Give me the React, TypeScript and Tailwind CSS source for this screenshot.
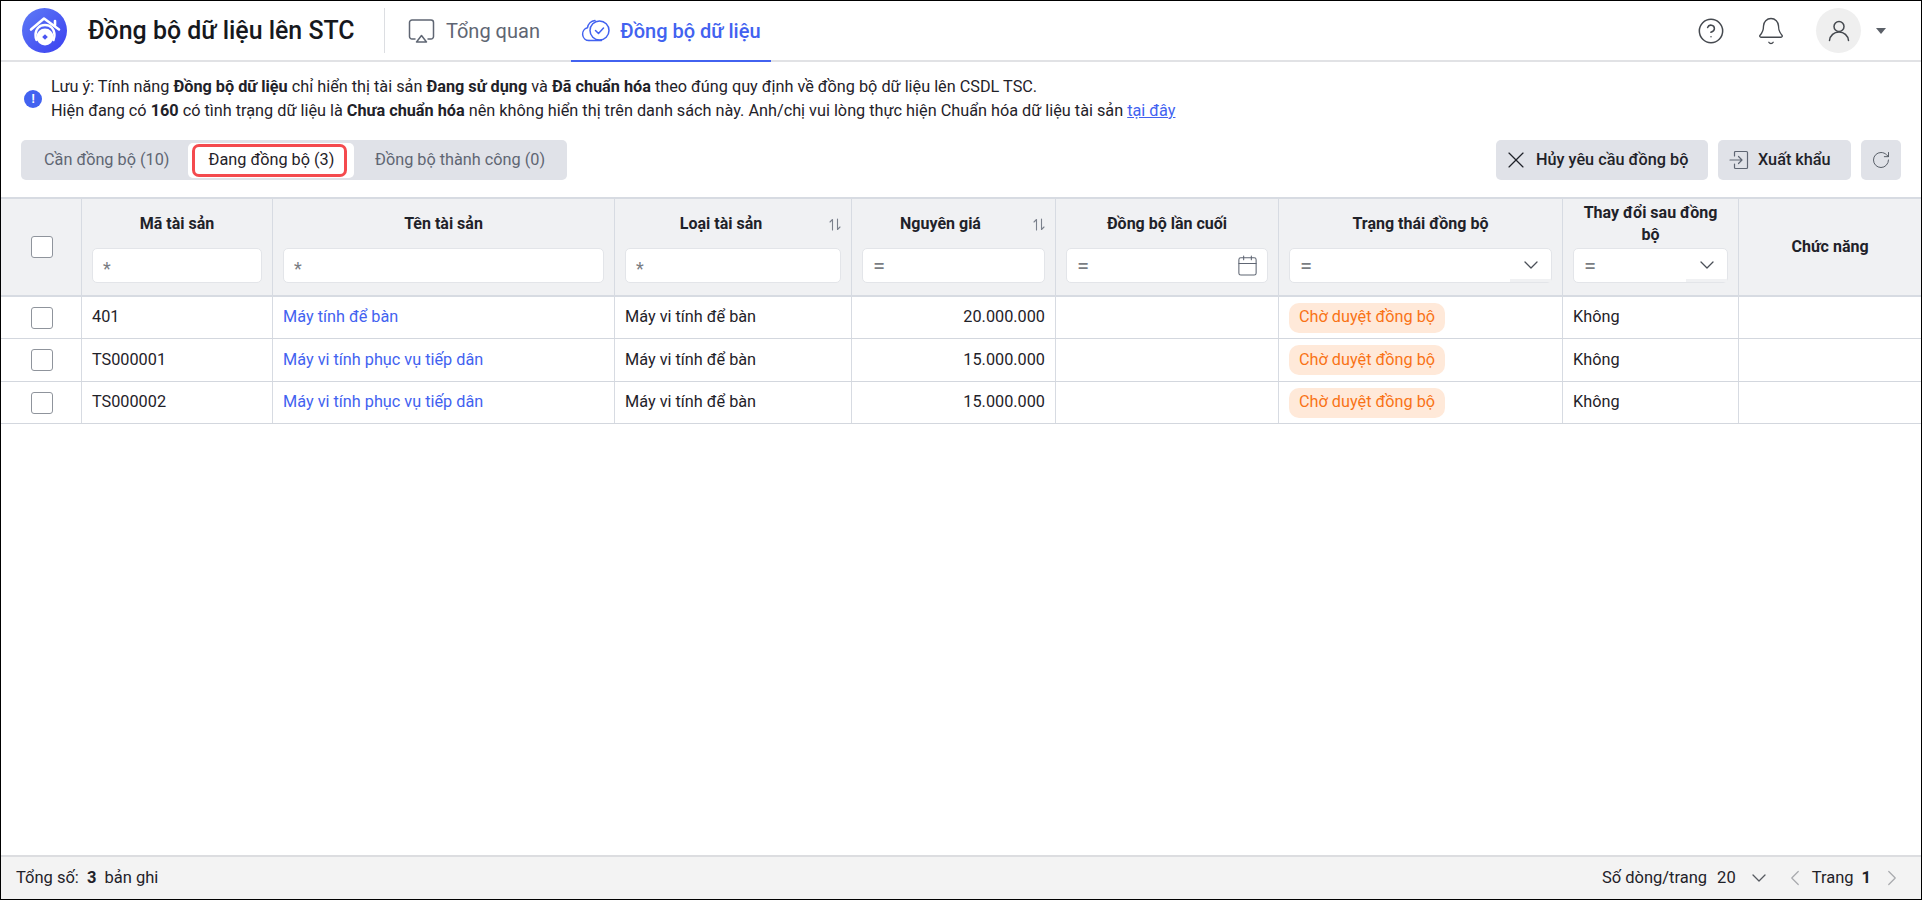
import { ChevronDown, ChevronLeft, ChevronRight, Calendar, RotateCw, X, Bell, CircleHelp } from 'lucide-react';

const gridCols = 'grid grid-cols-[81px_191px_342px_237px_204px_223px_284px_176px_1fr]';

const rows = [
  { code: '401', name: 'Máy tính để bàn', price: '20.000.000', height: 'h-[42px]' },
  { code: 'TS000001', name: 'Máy vi tính phục vụ tiếp dân', price: '15.000.000', height: 'h-[43px]' },
  { code: 'TS000002', name: 'Máy vi tính phục vụ tiếp dân', price: '15.000.000', height: 'h-[42px]' },
];

const Logo = () => (
  <svg width="45" height="45" viewBox="0 0 45 45">
    <defs>
      <linearGradient id="logoBg" x1="0" y1="0" x2="1" y2="1">
        <stop offset="0" stopColor="#5f7cf6" />
        <stop offset="1" stopColor="#3a3ff0" />
      </linearGradient>
    </defs>
    <circle cx="22.5" cy="22.5" r="22.5" fill="url(#logoBg)" />
    <path d="M9 21.5 22 10.5 37 21.5" fill="none" stroke="#fff" strokeWidth="2.6" strokeLinecap="round" strokeLinejoin="round" />
    <path d="M33 13v4" stroke="#fff" strokeWidth="2.6" strokeLinecap="round" />
    <path d="M14.5 32a11 11 0 0 1-1-5c0-6 4-10 9.500-10s9.500 4 9.500 10c0 2-.5 3.500-1 5" fill="none" stroke="#fff" strokeWidth="2.400" strokeLinecap="round" />
    <circle cx="23" cy="29" r="8.500" fill="#fff" />
    <path d="M23 26.200l2.800 2.800-2.800 2.800-2.800-2.800z" fill="#4a55f2" />
  </svg>
);

const ScreenIcon = () => (
  <svg width="27" height="26" viewBox="0 0 27 26" fill="none" stroke="#5f6673" strokeWidth="1.500" strokeLinecap="round" strokeLinejoin="round">
    <path d="M7 21H4a2.500 2.500 0 0 1-2.500-2.500V4.500A2.500 2.500 0 0 1 4 2h19a2.500 2.500 0 0 1 2.500 2.500v14A2.500 2.500 0 0 1 23 21h-3" />
    <path d="M13.500 17.500 18.500 24h-10z" />
  </svg>
);

const CloudCheckIcon = () => (
  <svg width="29" height="25" viewBox="0 0 29 25" fill="none" stroke="#4262f0" strokeWidth="1.500" strokeLinecap="round" strokeLinejoin="round">
    <path d="M8 22.500a6.500 6.500 0 0 1-1.500-12.800A8.500 8.500 0 0 1 14 2.500" />
    <path d="M8 22.500h12.500" />
    <circle cx="18.500" cy="12.500" r="9.500" />
    <path d="m14.500 12.500 3 3 5-5.500" />
  </svg>
);

const UserIcon = () => (
  <svg width="22" height="22" viewBox="0 0 22 22" fill="none" stroke="#45494f" strokeWidth="1.500" strokeLinecap="round">
    <circle cx="11" cy="6.500" r="5" />
    <path d="M1.500 20.500c.5-5 4.500-8.500 9.500-8.500s9 3.500 9.500 8.500" />
  </svg>
);

const ExportIcon = () => (
  <svg width="20" height="20" viewBox="0 0 20 20" fill="none" stroke="#5f6673" strokeWidth="1.200" strokeLinecap="round" strokeLinejoin="round">
    <path d="M5.500 6V2.500a1 1 0 0 1 1-1h11a1 1 0 0 1 1 1v15a1 1 0 0 1-1 1h-11a1 1 0 0 1-1-1V14" />
    <path d="M1 10h12M9.500 6.500 13 10l-3.500 3.500" />
  </svg>
);

const SortIcon = () => (
  <svg width="12" height="13" viewBox="0 0 12 13" fill="none" stroke="#7b818c" strokeWidth="1.100" strokeLinecap="round" strokeLinejoin="round" className="absolute right-[10px] top-[19px]">
    <path d="M3.500 12V1.500L1 4M8.500 1v10.500L11 9" />
  </svg>
);

const Checkbox = () => <div className="ml-[1px] w-[22px] h-[22px] rounded-[3px] border border-[#8f949c] bg-white" />;

const Filter = ({ mark, children }: { mark: string; children?: React.ReactNode }) => (
  <div className="relative flex items-center h-[35px] bg-white rounded-[5px] border border-[#e3e5e9] pl-[10px] text-[#7a7d83]">
    {mark === '*' ? <span className="text-[18px] translate-y-[3px]">*</span> : <span className="text-[22px]">{mark}</span>}
    {children}
  </div>
);

const SelectFilter = () => (
  <Filter mark="=">
    <ChevronDown size={24} strokeWidth={1.3} className="absolute right-[8px] top-[4px] text-[#4a4f57]" />
    <div className="absolute right-0 bottom-0 w-[41px] h-[3px] bg-[#f0f1f3]" />
  </Filter>
);

const HeadCell = ({ title, sort, filter, titleClass = '' }: { title: string; sort?: boolean; filter: React.ReactNode; titleClass?: string }) => (
  <div className="relative flex flex-col border-r border-[#d7dbe2] px-[10px]">
    <div className={`h-[49px] flex items-center justify-center text-center font-bold text-[16px] leading-[22px] text-[#1f2229] ${titleClass}`}>{title}</div>
    {sort && <SortIcon />}
    {filter}
  </div>
);

export default function App() {
  return (
    <div className="w-[1922px] h-[900px] flex flex-col bg-white border border-black font-['Roboto',sans-serif] text-[16.25px] text-[#1f2229] overflow-hidden">
      <header className="h-[61px] flex items-center border-b-2 border-[#e1e2e5] shrink-0">
        <div className="ml-[21px]"><Logo /></div>
        <h1 className="ml-[21px] w-[296px] text-[24.900px] font-medium text-[#16181d]">Đồng bộ dữ liệu lên STC</h1>
        <div className="w-px h-[45px] bg-[#dcdee2]" />
        <div className="ml-[23px] flex items-center gap-[11px] text-[20px] text-[#5f6673]">
          <ScreenIcon />
          Tổng quan
        </div>
        <div className="relative ml-[31px] h-full w-[200px] flex items-center justify-center gap-[10px] text-[20px] font-medium text-[#4262f0]">
          <CloudCheckIcon />
          Đồng bộ dữ liệu
          <div className="absolute left-0 right-0 -bottom-[2px] h-[2px] bg-[#4262f0]" />
        </div>
        <div className="ml-auto flex items-center text-[#45494f]">
          <CircleHelp size={28} strokeWidth={1.3} />
          <Bell size={30} strokeWidth={1.1} className="ml-[31px]" />
          <div className="ml-[30px] w-[45px] h-[45px] rounded-full bg-[#efefef] flex items-center justify-center">
            <UserIcon />
          </div>
          <div className="ml-[15px] mr-[35px] w-0 h-0 border-x-[5px] border-x-transparent border-t-[6px] border-t-[#5b6068]" />
        </div>
      </header>

      <section className="flex items-center gap-[9px] pl-[23px] pt-[13px] leading-[24px] shrink-0">
        <div className="w-[18px] h-[18px] rounded-full bg-[#4262f0] text-white text-[12px] font-bold flex items-center justify-center">!</div>
        <div>
          <p>
            Lưu ý: Tính năng <b>Đồng bộ dữ liệu</b> chỉ hiển thị tài sản <b>Đang sử dụng</b> và <b>Đã chuẩn hóa</b> theo đúng quy định về đồng bộ dữ liệu lên CSDL TSC.
          </p>
          <p>
            Hiện đang có <b>160</b> có tình trạng dữ liệu là <b>Chưa chuẩn hóa</b> nên không hiển thị trên danh sách này. Anh/chị vui lòng thực hiện Chuẩn hóa dữ liệu tài sản <a className="text-[#4262f0] underline">tại đây</a>
          </p>
        </div>
      </section>

      <section className="flex items-center justify-between px-[20px] mt-[17px] shrink-0">
        <div className="flex items-center h-[40px] w-[546px] bg-[#e0e2e8] rounded-[5px] text-[#5f6673]">
          <div className="w-[167px] pl-[23px]">Cần đồng bộ (10)</div>
          <div className="w-[166px] h-[35px] bg-white rounded-[5px] flex items-center pl-[4px]">
            <div className="w-[155px] h-[33px] pl-[4px] border-[3px] border-[#f44a4e] rounded-[7px] flex items-center justify-center text-[#1f2229]">Đang đồng bộ (3)</div>
          </div>
          <div className="pl-[21px]">Đồng bộ thành công (0)</div>
        </div>
        <div className="flex items-center gap-[10px]">
          <button className="h-[40px] w-[212px] bg-[#e0e2e8] rounded-[5px] flex items-center pl-[6px] gap-[6px] font-medium">
            <X size={28} strokeWidth={1} />
            Hủy yêu cầu đồng bộ
          </button>
          <button className="h-[40px] w-[133px] bg-[#e0e2e8] rounded-[5px] flex items-center pl-[11px] gap-[9px] font-medium">
            <ExportIcon />
            Xuất khẩu
          </button>
          <button className="h-[40px] w-[40px] bg-[#e0e2e8] rounded-[5px] flex items-center justify-center text-[#4d535d]">
            <RotateCw size={20} strokeWidth={1.1} />
          </button>
        </div>
      </section>

      <section className="mt-[17px] flex-1 flex flex-col min-h-0">
        <div className={`${gridCols} h-[100px] bg-[#f0f1f3] border-y-2 border-[#d7dbe2]`}>
          <div className="flex items-center justify-center border-r border-[#d7dbe2]"><Checkbox /></div>
          <HeadCell title="Mã tài sản" filter={<Filter mark="*" />} />
          <HeadCell title="Tên tài sản" filter={<Filter mark="*" />} />
          <HeadCell title="Loại tài sản" titleClass="pr-[24px]" sort filter={<Filter mark="*" />} />
          <HeadCell title="Nguyên giá" titleClass="pr-[26px]" sort filter={<Filter mark="=" />} />
          <HeadCell title="Đồng bộ lần cuối" filter={<Filter mark="="><Calendar size={23} strokeWidth={1.1} className="absolute right-[8px] top-[5px] text-[#5f6673]" /></Filter>} />
          <HeadCell title="Trạng thái đồng bộ" filter={<SelectFilter />} />
          <HeadCell title="Thay đổi sau đồng bộ" filter={<SelectFilter />} />
          <div className="flex items-center justify-center font-bold text-[16px]">Chức năng</div>
        </div>
        {rows.map((row) => (
          <div key={row.code} className={`${gridCols} ${row.height} border-b border-[#d3d7de]`}>
            <div className="flex items-center justify-center border-r border-[#d7dbe2]"><Checkbox /></div>
            <div className="flex items-center px-[10px] border-r border-[#d7dbe2]">{row.code}</div>
            <div className="flex items-center px-[10px] border-r border-[#d7dbe2] text-[#4262f0]">{row.name}</div>
            <div className="flex items-center px-[10px] border-r border-[#d7dbe2]">Máy vi tính để bàn</div>
            <div className="flex items-center justify-end px-[10px] border-r border-[#d7dbe2]">{row.price}</div>
            <div className="border-r border-[#d7dbe2]" />
            <div className="flex items-center px-[10px] border-r border-[#d7dbe2]">
              <span className="h-[30px] px-[10px] flex items-center rounded-[10px] bg-[#ffe9d9] text-[#f97316]">Chờ duyệt đồng bộ</span>
            </div>
            <div className="flex items-center px-[10px] border-r border-[#d7dbe2]">Không</div>
            <div />
          </div>
        ))}
      </section>

      <footer className="h-[44px] shrink-0 flex items-center justify-between bg-[#f3f3f3] border-t-2 border-[#dcdde0] pl-[15px] pr-[16px] text-[16.500px]">
        <div>Tổng số: <b className="mx-[4px]">3</b> bản ghi</div>
        <div className="flex items-center">
          Số dòng/trang
          <span className="ml-[10px]">20</span>
          <ChevronDown size={24} strokeWidth={1.3} className="ml-[11px] text-[#55595f]" />
          <ChevronLeft size={26} strokeWidth={1.1} className="ml-[11px] text-[#a7a9ad]" />
          <span className="ml-[4px]">Trang</span>
          <b className="ml-[8px]">1</b>
          <ChevronRight size={26} strokeWidth={1.1} className="ml-[8px] text-[#a7a9ad]" />
        </div>
      </footer>
    </div>
  );
}
